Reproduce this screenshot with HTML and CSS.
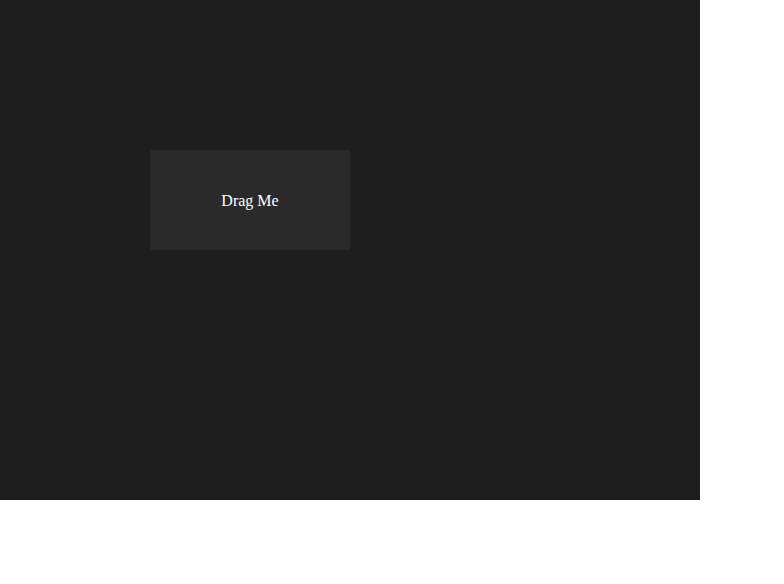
FILE: index.html
```html
<!DOCTYPE html>
<html>
<head>
<meta charset="utf-8">
<link rel="stylesheet" href="styles.css">
</head>
<body>
<div class="canvas">
  <div class="draggable">Drag Me</div>
</div>
</body>
</html>
```
FILE: styles.css
```css
html, body {
  margin: 0;
  padding: 0;
  background: #ffffff;
}
.canvas {
  position: relative;
  width: 700px;
  height: 500px;
  background: #1e1e1e;
}
.draggable {
  position: absolute;
  left: 150px;
  top: 150px;
  box-sizing: border-box;
  width: 200px;
  height: 100px;
  padding-top: 2px;
  background: #2a2a2a;
  color: #ffffff;
  font-family: "Liberation Serif", "Times New Roman", serif;
  font-size: 16px;
  display: flex;
  align-items: center;
  justify-content: center;
}
```
